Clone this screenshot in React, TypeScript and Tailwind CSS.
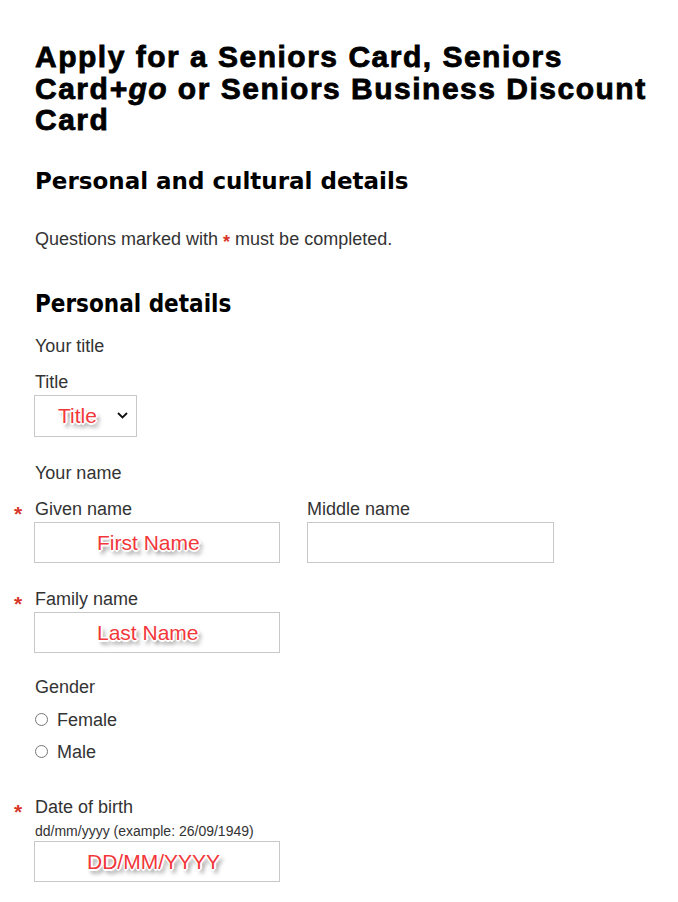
import React from "react"

const NOTE_SHADOW =
  "[text-shadow:1px_1px_0_#fff,-1px_-1px_0_#fff,1px_-1px_0_#fff,-1px_1px_0_#fff,0_2px_0_#fff,2px_0_0_#fff,3px_4px_4px_rgba(0,0,0,0.6)]"

function Star() {
  return (
    <span className="absolute -left-[21px] top-[4px] text-[21px] leading-none text-[#d9362b] font-bold">*</span>
  )
}

function Note({ text }: { text: string }) {
  return <span className={`text-[21px] leading-none text-[#f2373a] ${NOTE_SHADOW}`}>{text}</span>
}

export default function App() {
  return (
    <div className="min-h-screen bg-white px-[35px] pt-[41px] pb-10 text-[18px] text-[#333] [font-family:'Liberation_Sans',Arial,sans-serif]">
      <h1 className="w-[628px] text-[30px] font-bold leading-[31.5px] tracking-[1.5px] text-black [-webkit-text-stroke:0.8px_black]">
        Apply for a Seniors Card, Seniors Card<em>+go</em> or Seniors Business Discount Card
      </h1>

      <h2 className="mt-[32px] text-[23px] font-bold leading-[26px] text-black [font-family:'DejaVu_Sans',Verdana,sans-serif]">
        Personal and cultural details
      </h2>

      <p className="mt-[35px] leading-[20px]">
        Questions marked with{" "}
        <span className="relative top-[3px] text-[18px] font-bold leading-none text-[#d9362b]">*</span> must be completed.
      </p>

      <h3 className="mt-[41px] text-[24px] font-semibold leading-[28px] text-black [font-family:'DejaVu_Sans_Condensed','DejaVu_Sans',sans-serif]">
        Personal details
      </h3>

      <p className="mt-[18px] leading-[20px]">Your title</p>
      <p className="mt-[16px] leading-[20px]">Title</p>
      <div className="ml-[-1px] mt-[3px] flex h-[42px] w-[103px] items-center border border-[#c8c8c8] pl-[23px]">
        <Note text="Title" />
        <svg className="ml-auto mr-[8px]" width="11" height="7" viewBox="0 0 11 7">
          <path d="M1 1l4.5 4.5L10 1" fill="none" stroke="#111" strokeWidth="1.8" />
        </svg>
      </div>

      <p className="mt-[26px] leading-[20px]">Your name</p>
      <div className="mt-[16px] flex gap-[27px]">
        <div className="w-[245px]">
          <div className="relative leading-[20px]">
            <Star />
            Given name
          </div>
          <div className="ml-[-1px] mt-[3px] flex h-[41px] w-[246px] items-center border border-[#c8c8c8] pl-[62px]">
            <Note text="First Name" />
          </div>
        </div>
        <div>
          <div className="leading-[20px]">Middle name</div>
          <div className="mt-[3px] h-[41px] w-[247px] border border-[#c8c8c8]" />
        </div>
      </div>

      <div className="mt-[26px] relative leading-[20px]">
        <Star />
        Family name
      </div>
      <div className="ml-[-1px] mt-[3px] flex h-[41px] w-[246px] items-center border border-[#c8c8c8] pl-[62px]">
        <Note text="Last Name" />
      </div>

      <p className="mt-[24px] leading-[20px]">Gender</p>
      <div className="mt-[13px] flex flex-col gap-[12px]">
        {["Female", "Male"].map((g) => (
          <label key={g} className="flex items-center gap-[9px] leading-[20px]">
            <span className="h-[13px] w-[13px] rounded-full border border-[#767676] bg-white" />
            {g}
          </label>
        ))}
      </div>

      <div className="mt-[35px] relative leading-[20px]">
        <Star />
        Date of birth
      </div>
      <p className="mt-[6px] text-[14px] leading-[16px]">dd/mm/yyyy (example: 26/09/1949)</p>
      <div className="ml-[-1px] mt-[2px] flex h-[41px] w-[246px] items-center border border-[#c8c8c8] pl-[52px]">
        <Note text="DD/MM/YYYY" />
      </div>
    </div>
  )
}
